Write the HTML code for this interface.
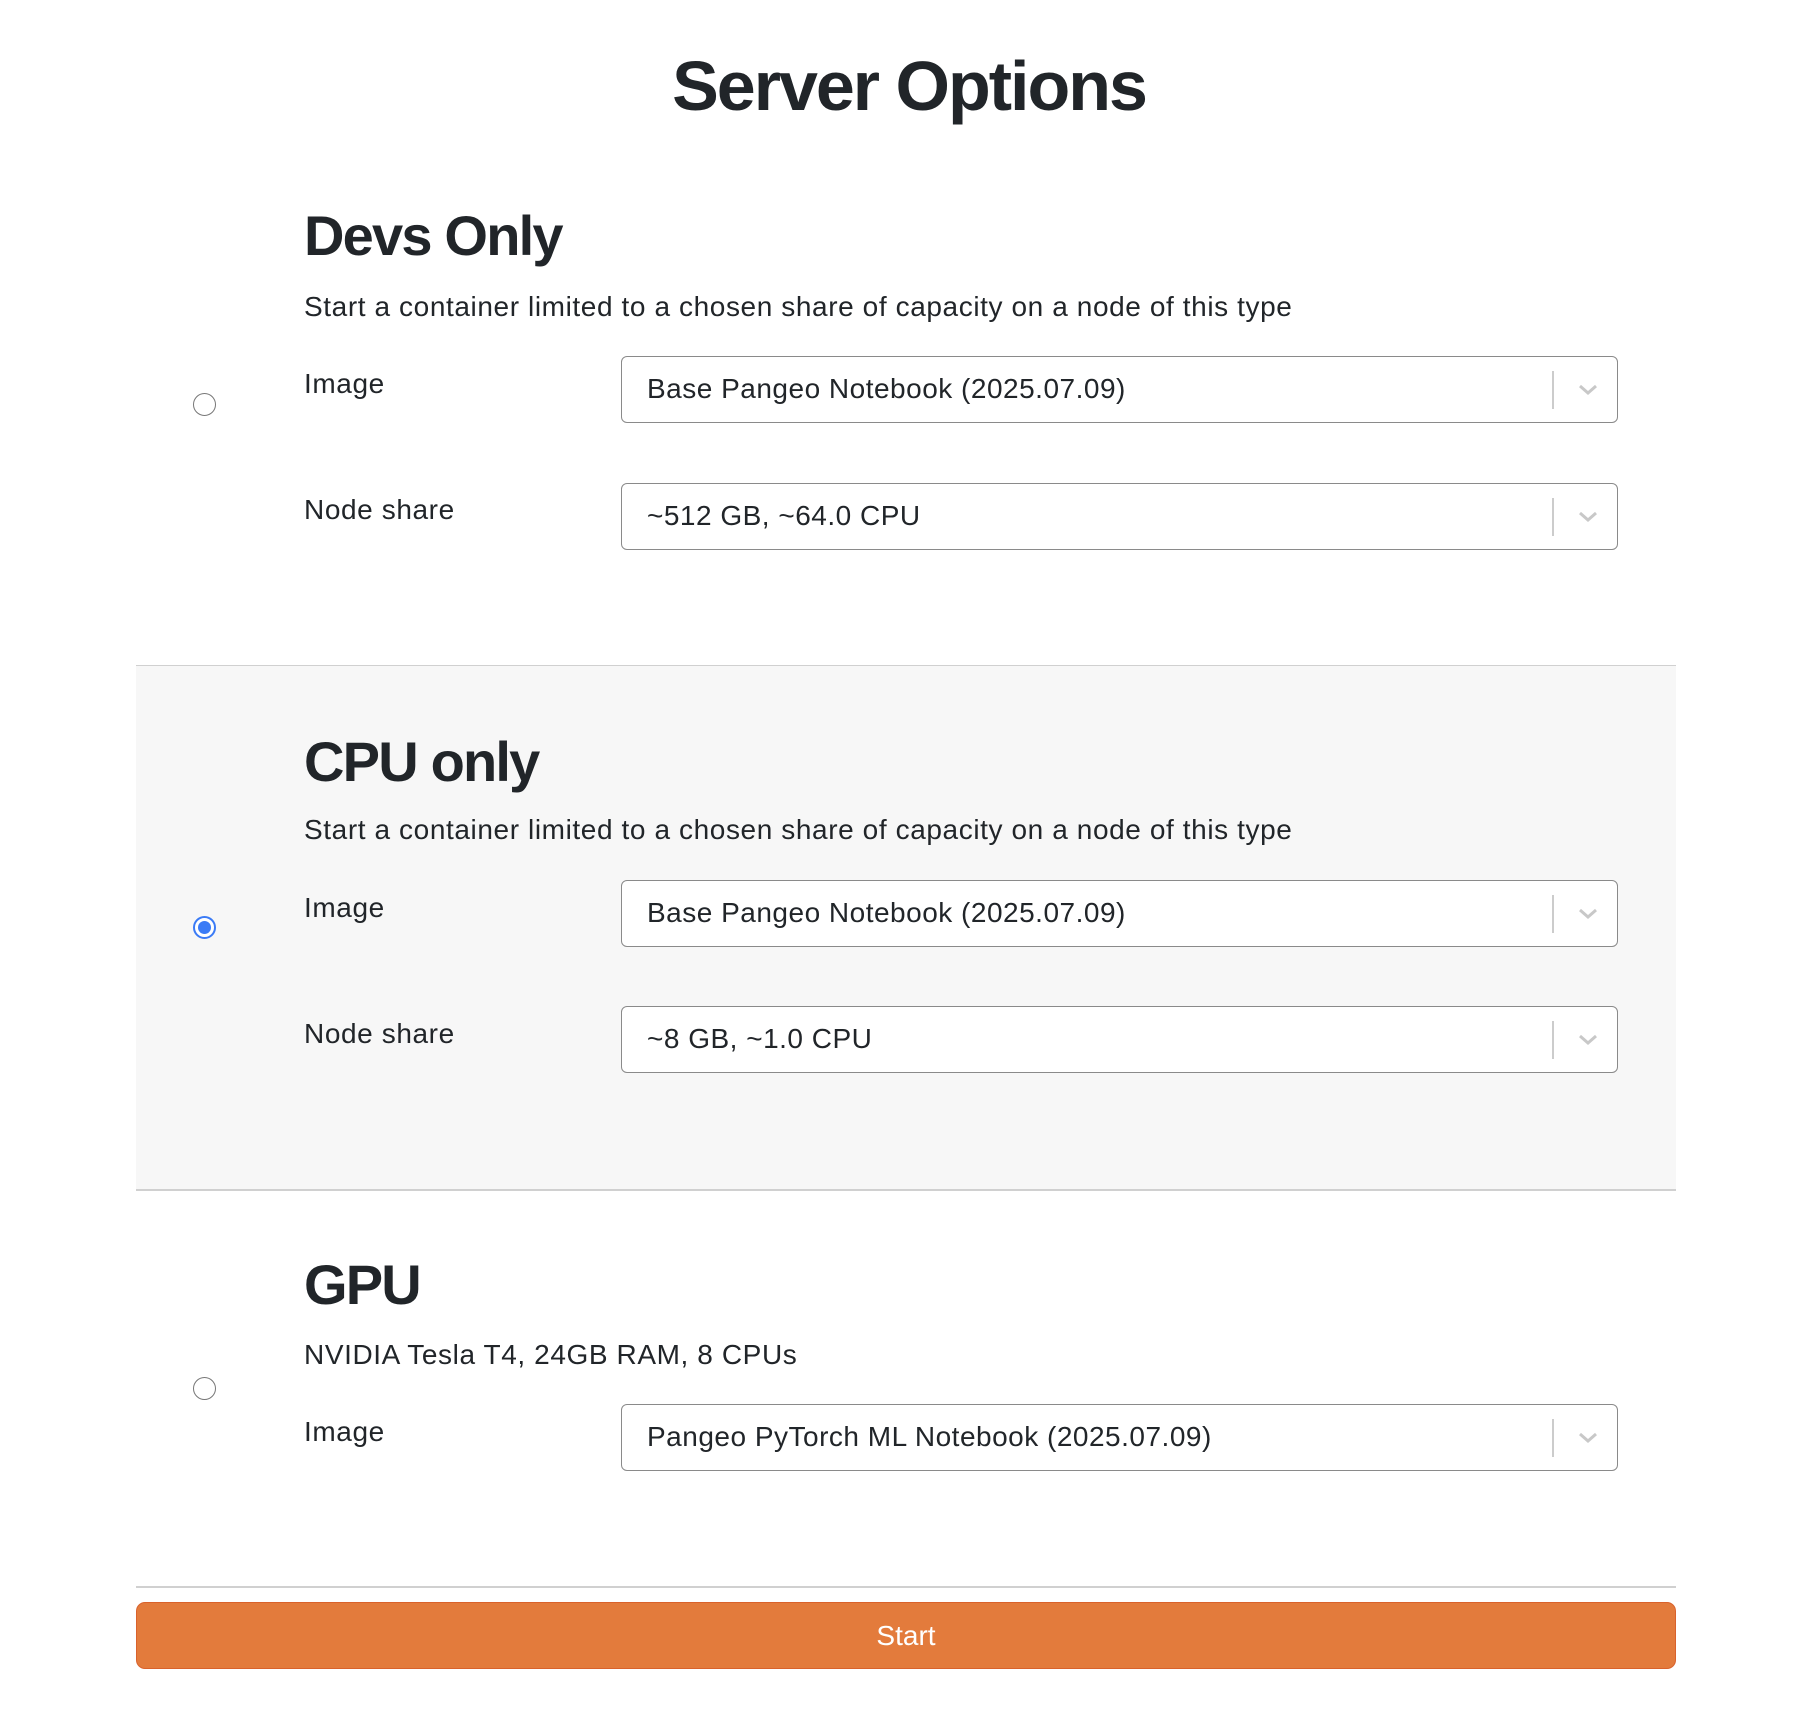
<!DOCTYPE html>
<html><head><meta charset="utf-8"><style>
*{margin:0;padding:0;box-sizing:border-box}
body{width:1818px;height:1722px;background:#fff;font-family:"Liberation Sans",sans-serif;color:#212529;position:relative;overflow:hidden}
.a{position:absolute;white-space:nowrap}
h1{position:absolute;left:0;width:1818px;text-align:center;font-size:70px;font-weight:600;top:46px;line-height:80px;letter-spacing:-2px}
h2{position:absolute;left:304px;font-size:56px;font-weight:600;line-height:64px;letter-spacing:-1.8px}
.t{font-size:28px;line-height:34px;letter-spacing:0.6px}
.sel{position:absolute;left:621px;width:997px;height:67px;border:1.5px solid #8a8a8a;border-radius:6px;background:#fff;font-size:28px;padding-left:25px;line-height:64px;letter-spacing:0.5px}
.sel:before{content:"";position:absolute;left:930px;top:14px;width:2px;height:38px;background:#ccc}
.sel svg{position:absolute;left:954px;top:22px}
.radio{position:absolute;left:193px;width:23px;height:23px;border-radius:50%;border:1.5px solid #777;background:#fff}
.radio.on{border:2px solid #3b7bf6}
.radio.on:after{content:"";position:absolute;left:3px;top:3px;width:13px;height:13px;border-radius:50%;background:#3b7bf6}
.hr{position:absolute;left:136px;width:1540px;height:1.5px;background:#d0d0d0}
</style></head><body>
<h1>Server Options</h1>

<h2 style="top:204px">Devs Only</h2>
<div class="a t" style="left:304px;top:290px">Start a container limited to a chosen share of capacity on a node of this type</div>
<div class="radio" style="top:393px"></div>
<div class="a t" style="left:304px;top:367px">Image</div>
<div class="sel" style="top:356px">Base Pangeo Notebook (2025.07.09)<svg width="24" height="20" viewBox="0 0 24 20"><path d="M4 7l8 7 8-7" fill="none" stroke="#c8c8c8" stroke-width="3"/></svg></div>
<div class="a t" style="left:304px;top:493px">Node share</div>
<div class="sel" style="top:483px">~512 GB, ~64.0 CPU<svg width="24" height="20" viewBox="0 0 24 20"><path d="M4 7l8 7 8-7" fill="none" stroke="#c8c8c8" stroke-width="3"/></svg></div>

<div class="hr" style="top:665px"></div>
<div class="a" style="left:136px;top:666px;width:1540px;height:523px;background:#f7f7f7"></div>
<div class="hr" style="top:1189px"></div>

<h2 style="top:730px">CPU only</h2>
<div class="a t" style="left:304px;top:813px">Start a container limited to a chosen share of capacity on a node of this type</div>
<div class="radio on" style="top:916px"></div>
<div class="a t" style="left:304px;top:891px">Image</div>
<div class="sel" style="top:880px">Base Pangeo Notebook (2025.07.09)<svg width="24" height="20" viewBox="0 0 24 20"><path d="M4 7l8 7 8-7" fill="none" stroke="#c8c8c8" stroke-width="3"/></svg></div>
<div class="a t" style="left:304px;top:1017px">Node share</div>
<div class="sel" style="top:1006px">~8 GB, ~1.0 CPU<svg width="24" height="20" viewBox="0 0 24 20"><path d="M4 7l8 7 8-7" fill="none" stroke="#c8c8c8" stroke-width="3"/></svg></div>

<h2 style="top:1253px">GPU</h2>
<div class="a t" style="left:304px;top:1338px">NVIDIA Tesla T4, 24GB RAM, 8 CPUs</div>
<div class="radio" style="top:1377px"></div>
<div class="a t" style="left:304px;top:1415px">Image</div>
<div class="sel" style="top:1404px">Pangeo PyTorch ML Notebook (2025.07.09)<svg width="24" height="20" viewBox="0 0 24 20"><path d="M4 7l8 7 8-7" fill="none" stroke="#c8c8c8" stroke-width="3"/></svg></div>

<div class="hr" style="top:1586px"></div>
<div class="a" style="left:136px;top:1602px;width:1540px;height:67px;background:#e37b3c;border:1px solid #d9622c;border-radius:9px;color:#fff;font-size:28px;text-align:center;line-height:65px">Start</div>
</body></html>
